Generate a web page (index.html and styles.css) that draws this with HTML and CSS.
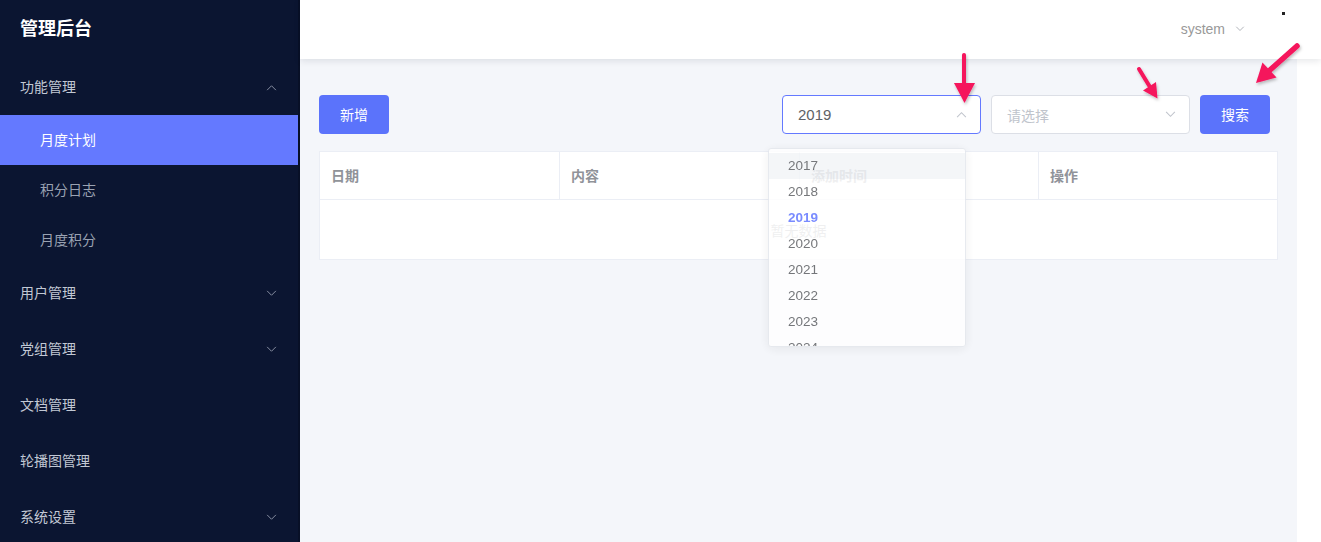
FILE: index.html
```html
<!DOCTYPE html>
<html lang="zh-CN">
<head>
<meta charset="utf-8">
<title>管理后台</title>
<link rel="stylesheet" href="styles.css">
</head>
<body>
<div class="app">
  <aside class="sidebar">
    <div class="brand">管理后台</div>
    <ul class="menu">
      <li class="group open">
        <div class="item top"><span>功能管理</span>
          <svg class="chev" viewBox="0 0 12 8" width="11" height="7"><path d="M1 7 L6 2 L11 7" fill="none" stroke="#8a93a6" stroke-width="1.1"/></svg>
        </div>
        <ul class="sub">
          <li class="item subitem active">月度计划</li>
          <li class="item subitem">积分日志</li>
          <li class="item subitem">月度积分</li>
        </ul>
      </li>
      <li class="item top"><span>用户管理</span>
        <svg class="chev" viewBox="0 0 12 8" width="11" height="7"><path d="M1 1 L6 6 L11 1" fill="none" stroke="#8a93a6" stroke-width="1.1"/></svg>
      </li>
      <li class="item top"><span>党组管理</span>
        <svg class="chev" viewBox="0 0 12 8" width="11" height="7"><path d="M1 1 L6 6 L11 1" fill="none" stroke="#8a93a6" stroke-width="1.1"/></svg>
      </li>
      <li class="item top"><span>文档管理</span></li>
      <li class="item top"><span>轮播图管理</span></li>
      <li class="item top"><span>系统设置</span>
        <svg class="chev" viewBox="0 0 12 8" width="11" height="7"><path d="M1 1 L6 6 L11 1" fill="none" stroke="#8a93a6" stroke-width="1.1"/></svg>
      </li>
    </ul>
  </aside>
  <div class="main">
    <header class="header">
      <div class="user">system
        <svg class="uchev" viewBox="0 0 12 8" width="10" height="6"><path d="M1 1 L6 6 L11 1" fill="none" stroke="#a8abb2" stroke-width="1.2"/></svg>
      </div>
      <span class="dot"></span>
    </header>
    <section class="content">
      <div class="toolbar">
        <button class="btn">新增</button>
        <div class="filters">
          <div class="select-wrap">
            <div class="select focus"><span class="val">2019</span>
              <svg class="schev" viewBox="0 0 12 8" width="11" height="7"><path d="M1 7 L6 2 L11 7" fill="none" stroke="#c0c4cc" stroke-width="1.2"/></svg>
            </div>
            <div class="dropdown">
              <ul class="options">
                <li class="opt hover">2017</li>
                <li class="opt">2018</li>
                <li class="opt selected">2019</li>
                <li class="opt">2020</li>
                <li class="opt">2021</li>
                <li class="opt">2022</li>
                <li class="opt">2023</li>
                <li class="opt">2024</li>
              </ul>
            </div>
          </div>
          <div class="select"><span class="ph">请选择</span>
            <svg class="schev" viewBox="0 0 12 8" width="11" height="7"><path d="M1 1 L6 6 L11 1" fill="none" stroke="#c0c4cc" stroke-width="1.2"/></svg>
          </div>
          <button class="btn">搜索</button>
        </div>
      </div>
      <div class="table">
        <div class="thead">
          <div class="th">日期</div>
          <div class="th">内容</div>
          <div class="th">添加时间</div>
          <div class="th">操作</div>
        </div>
        <div class="empty">暂无数据</div>
      </div>
    </section>
  </div>
</div>
<svg class="annot" width="1321" height="542" viewBox="0 0 1321 542">
  <defs>
    <filter id="sh" x="-50%" y="-50%" width="200%" height="200%">
      <feDropShadow dx="1" dy="2" stdDeviation="1.5" flood-color="#000" flood-opacity="0.25"/>
    </filter>
  </defs>
  <g fill="#f5145c" stroke="#f5145c" filter="url(#sh)">
    <line x1="964" y1="55" x2="964" y2="86" stroke-width="4" stroke-linecap="round"/>
    <polygon points="954,83 975,83 964.5,103" stroke="none"/>
    <line x1="1139" y1="69" x2="1150" y2="87" stroke-width="4" stroke-linecap="round"/>
    <polygon points="1143,90.5 1156,82 1157.5,98.5" stroke="none"/>
    <line x1="1297" y1="46" x2="1270" y2="70" stroke-width="5.5" stroke-linecap="round"/>
    <polygon points="1262.5,62.5 1276.5,77.5 1256,83" stroke="none"/>
  </g>
</svg>
</body>
</html>
```

FILE: styles.css
```css
* { box-sizing: border-box; }
html, body { margin: 0; padding: 0; }
body {
  font-family: "Liberation Sans", "Noto Sans CJK SC", sans-serif;
  font-size: 14px;
  background: #fff;
  width: 1321px;
  height: 542px;
  overflow: hidden;
  position: relative;
}
ul { list-style: none; margin: 0; padding: 0; }

.app { display: flex; height: 542px; }

.sidebar {
  width: 300px;
  flex: none;
  background: #0b1531;
  border-right: 2px solid #081027;
  color: #bfc6d4;
}
.brand {
  height: 59px;
  display: flex;
  align-items: center;
  padding-left: 20px;
  padding-bottom: 5px;
  font-size: 18px;
  font-weight: bold;
  color: #fff;
}
.item {
  display: flex;
  align-items: center;
  justify-content: space-between;
  padding-right: 20px;
}
.top { height: 56px; padding-left: 20px; padding-bottom: 2px; color: #c2c8d4; }
.chev { margin-top: 2px; }
.subitem { height: 50px; padding-left: 40px; padding-bottom: 2px; color: #9aa2b2; }
.subitem.active { background: #6479ff; color: #fff; }
.chev { display: block; margin-right: 1px; }

.main { flex: none; width: 1021px; display: flex; flex-direction: column; }
.header {
  height: 59px;
  flex: none;
  background: #fff;
  display: flex;
  justify-content: flex-end;
  align-items: center;
  padding-right: 36px;
  padding-bottom: 1px;
  box-shadow: 0 2px 7px rgba(0, 21, 41, 0.1);
  position: relative;
  z-index: 1;
}
.user { display: flex; align-items: center; color: #999; font-size: 14px; }
.uchev { margin-left: 10px; }
.dot {
  align-self: flex-start;
  margin-top: 12px;
  margin-left: 37px;
  width: 3px;
  height: 3px;
  background: #222;
}

.content {
  width: 997px;
  flex: 1;
  background: #f4f6fa;
  padding: 36px 19px 0 19px;
}
.toolbar { display: flex; align-items: center; }
.filters { margin-left: auto; margin-right: 8px; display: flex; align-items: center; gap: 10px; }
.btn {
  width: 70px;
  height: 39px;
  border: none;
  border-radius: 4px;
  background: #5b73fb;
  color: #fff;
  font-family: inherit;
  font-size: 14px;
  padding: 0 0 2px;
}
.select-wrap { position: relative; }
.select {
  width: 199px;
  height: 39px;
  background: #fff;
  border: 1px solid #dcdfe6;
  border-radius: 4px;
  display: flex;
  align-items: center;
  justify-content: space-between;
  padding: 0 13px 0 15px;
}
.select.focus { border-color: #6479ff; }
.val { color: #606266; font-size: 15px; }
.ph { color: #c0c4cc; }

.dropdown {
  position: absolute;
  left: -14px;
  top: 53px;
  width: 198px;
  height: 199px;
  background: #fff;
  border: 1px solid #e4e7ed;
  border-radius: 3px;
  box-shadow: 0 2px 12px rgba(0, 0, 0, 0.08);
  opacity: 0.86;
  overflow: hidden;
  z-index: 5;
}
.options { padding-top: 4px; }
.opt {
  height: 26px;
  line-height: 26px;
  padding-left: 19px;
  color: #606266;
  font-size: 13.5px;
}
.opt.hover { background: #f3f5f8; }
.opt.selected { color: #6479ff; font-weight: bold; }

.table {
  margin-top: 17px;
  width: 959px;
  background: #fff;
  border: 1px solid #ebeef5;
}
.thead { display: grid; grid-template-columns: 240px 240px 239px 238px; border-bottom: 1px solid #ebeef5; }
.th {
  height: 47px;
  display: flex;
  align-items: center;
  padding-left: 11px;
  padding-bottom: 1px;
  color: #909399;
  font-weight: bold;
  border-right: 1px solid #ebeef5;
}
.th:last-child { border-right: none; }
.empty {
  height: 59px;
  display: flex;
  align-items: center;
  justify-content: center;
  color: #909399;
}

.annot { position: absolute; left: 0; top: 0; pointer-events: none; z-index: 10; }
```
